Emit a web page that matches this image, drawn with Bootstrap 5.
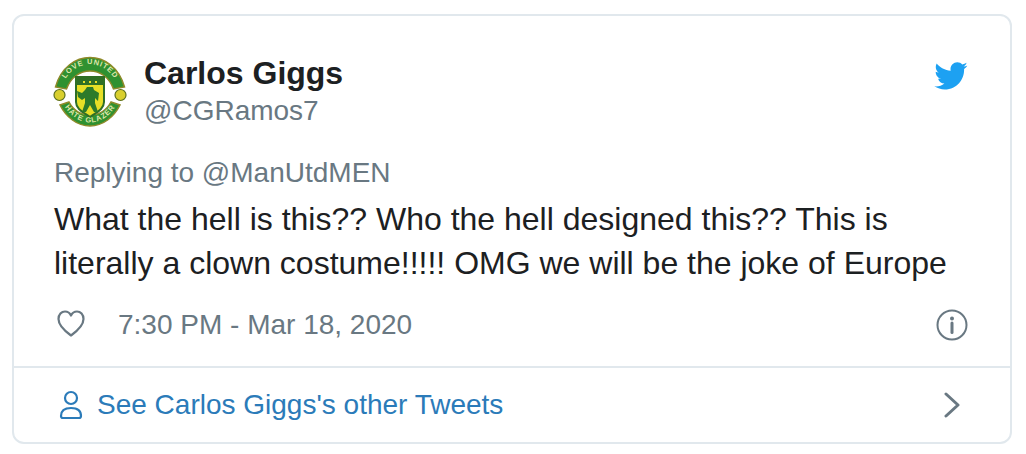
<!DOCTYPE html>
<html lang="en">
<head>
<meta charset="utf-8">
<title>Tweet</title>
<link href="https://cdn.jsdelivr.net/npm/bootstrap@5.3.0/dist/css/bootstrap.min.css" rel="stylesheet">
<style>
html,body{background:#fff;margin:0;height:454px;overflow:hidden}
body{font-family:"Liberation Sans",Arial,sans-serif;padding:14px 14px 10px 12px;color:#1c2022}
.tw-card{width:1000px;height:430px;border:2px solid #e1e8ed;border-radius:12px;background:#fff}
.tw-main{padding:40px 42px 0 40px;height:352px;}
.tw-avatar{width:74px;height:72px;flex:none;margin-left:-1px;margin-right:17px}
.tw-name{font-size:32px;font-weight:700;line-height:36px;color:#1c2022;margin-top:-1px}
.tw-handle{font-size:28px;line-height:36px;color:#697882;margin-top:2px}
.tw-reply{font-size:28px;line-height:36px;color:#697882;margin-top:26px}
.tw-text{font-size:32px;line-height:44px;color:#1c2022;margin-top:6px;white-space:nowrap}
.tw-meta{margin-top:22px;font-size:28px;line-height:36px;color:#697882}
.tw-heart{margin-left:3px;margin-bottom:4px}
.tw-time{margin-left:33px}
.tw-foot{height:76px;border-top:2px solid #e1e8ed;padding:0 50px 0 45px;font-size:28px}
.tw-foot a{color:#2b7bb9;text-decoration:none;margin-left:14px}
.tw-bird{margin-top:6px}
.tw-crest-text{font-family:"Liberation Sans",Arial,sans-serif;font-size:7.500px;font-weight:700;fill:#dfe6a8;letter-spacing:.8px}
</style>
</head>
<body>
<div class="tw-card d-flex flex-column">
  <div class="tw-main">
    <div class="d-flex align-items-start">
      <svg class="tw-avatar" viewBox="0 0 74 72" role="img" aria-label="Crest">
        <defs>
          <path id="crest-top" d="M8.500 34C12 17 24 8.500 37 8.500S62 17 65.500 34"/>
          <path id="crest-bot" d="M9 46C16 60 27 66.500 37 66.500S58 60 65 46"/>
        </defs>
        <circle cx="6.500" cy="39" r="5.500" fill="#d9cf2e" stroke="#5c6f1e" stroke-width="1.200"/>
        <circle cx="67.500" cy="39" r="5.500" fill="#d9cf2e" stroke="#5c6f1e" stroke-width="1.200"/>
        <path d="M2.500 31C8 11 23 1.500 37 1.500S66 11 71.500 31l-11 2C56 21 47 15 37 15S18 21 13.500 33z" fill="#2f9130" stroke="#8f8a2a" stroke-width="1.500"/>
        <path d="M7 49c6 12 17 21 30 21s24-9 30-21l-9-3c-5 9-12 13-21 13s-16-4-21-13z" fill="#2f9130" stroke="#8f8a2a" stroke-width="1.500"/>
        <path d="M23 21h28v25c0 7-7 10-14 15-7-5-14-8-14-15z" fill="#e7df26" stroke="#2f6f26" stroke-width="2"/>
        <path d="M24 22h26v7H24z" fill="#2f6f26"/>
        <path d="M30 25h2v2h-2zm6 0h2v2h-2zm6 0h2v2h-2z" fill="#e7df26"/>
        <path d="M34 31h6l1 3 5 3-1 8-3-3v5l3 9h-4l-4-7-4 7h-4l3-9v-5l-3 2-4-3-1-6 5 2 3-3z" fill="#2d7a2a"/>
        <text class="tw-crest-text"><textPath href="#crest-top" startOffset="50%" text-anchor="middle">LOVE UNITED</textPath></text>
        <text class="tw-crest-text"><textPath href="#crest-bot" startOffset="50%" text-anchor="middle">HATE GLAZER</textPath></text>
      </svg>
      <div class="flex-grow-1">
        <div class="tw-name">Carlos Giggs</div>
        <div class="tw-handle">@CGRamos7</div>
      </div>
      <svg class="tw-bird" width="35" height="28" viewBox="0 2.600 24 19" preserveAspectRatio="none" aria-hidden="true"><path fill="#1da1f2" d="M23.643 4.937c-.835.37-1.732.62-2.675.733.962-.576 1.7-1.49 2.048-2.578-.9.534-1.897.922-2.958 1.13-.85-.904-2.06-1.47-3.4-1.47-2.572 0-4.658 2.086-4.658 4.66 0 .364.042.718.12 1.06-3.873-.195-7.304-2.05-9.602-4.868-.4.69-.63 1.49-.63 2.342 0 1.616.823 3.043 2.072 3.878-.764-.025-1.482-.234-2.11-.583v.06c0 2.257 1.605 4.14 3.737 4.568-.392.106-.803.162-1.227.162-.3 0-.593-.028-.877-.082.593 1.85 2.313 3.198 4.352 3.234-1.595 1.25-3.604 1.995-5.786 1.995-.376 0-.747-.022-1.112-.065 2.062 1.323 4.51 2.093 7.14 2.093 8.57 0 13.255-7.098 13.255-13.254 0-.2-.005-.402-.014-.602.91-.658 1.7-1.477 2.323-2.41z"/></svg>
    </div>
    <div class="tw-reply">Replying to @ManUtdMEN</div>
    <div class="tw-text">What the hell is this?? Who the hell designed this?? This is<br>literally a clown costume!!!!! OMG we will be the joke of Europe</div>
    <div class="tw-meta d-flex align-items-center">
      <svg class="tw-heart" width="28" height="27" viewBox="0 0 28 27" fill="none" stroke="#697882" stroke-width="2.200" aria-hidden="true"><path d="M14 25.500C5 19 1.500 14.500 1.500 9 1.500 4.500 4.500 1.500 8 1.500c2.700 0 4.800 1.400 6 4 1.200-2.600 3.300-4 6-4 3.500 0 6.500 3 6.500 7.500 0 5.500-3.500 10-12.500 16.500z" stroke-linejoin="round"/></svg>
      <span class="tw-time flex-grow-1">7:30 PM - Mar 18, 2020</span>
      <svg width="32" height="32" viewBox="0 0 32 32" fill="none" aria-hidden="true"><circle cx="16" cy="16" r="14.500" stroke="#697882" stroke-width="2"/><circle cx="16" cy="9.500" r="2" fill="#697882"/><path d="M16 14v9.500" stroke="#697882" stroke-width="3" stroke-linecap="round"/></svg>
    </div>
  </div>
  <div class="tw-foot d-flex align-items-center">
    <svg width="24" height="30" viewBox="0 0 24 30" fill="none" stroke="#2b7bb9" stroke-width="2.200" aria-hidden="true"><circle cx="12" cy="8" r="6"/><path d="M2 26c0-5 3-8 10-8s10 3 10 8c0 1-1 2-2 2H4c-1 0-2-1-2-2z"/></svg>
    <a href="#" class="flex-grow-1">See Carlos Giggs's other Tweets</a>
    <svg width="16" height="26" viewBox="0 0 16 26" fill="none" stroke="#697882" stroke-width="3" stroke-linecap="round" stroke-linejoin="round" aria-hidden="true"><path d="M2 2l12 11L2 24"/></svg>
  </div>
</div>
</body>
</html>
